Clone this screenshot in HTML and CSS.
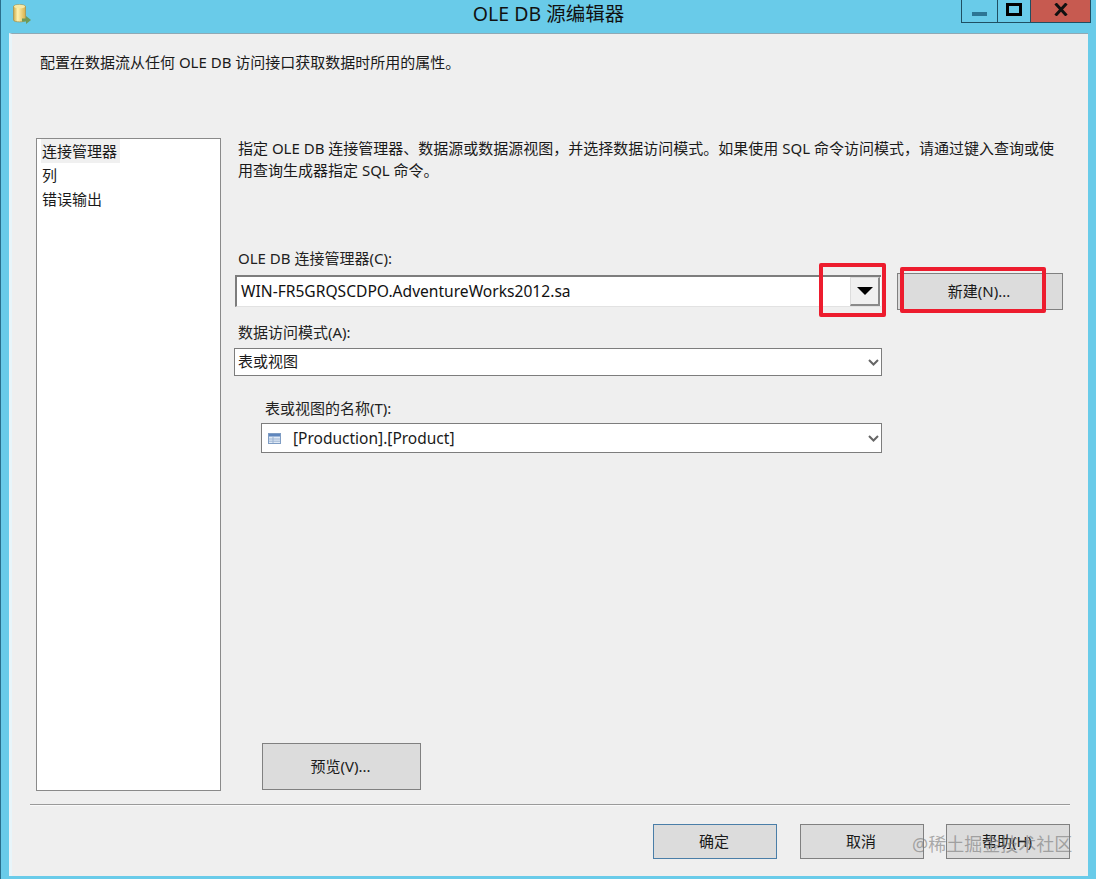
FILE: index.html
```html
<!DOCTYPE html>
<html lang="zh-CN">
<head>
    <meta charset="UTF-8">
    <meta name="viewport" content="width=device-width, initial-scale=1.0">
    <title>OLE DB 源编辑器</title>
    <link rel="stylesheet" href="styles.css">
</head>
<body>
    <div class="window">
        <!-- titlebar -->
        <header class="titlebar">
            <svg class="app-icon" width="20" height="21" viewBox="0 0 20 21">
                <defs>
                    <linearGradient id="can" x1="0" x2="1" y1="0" y2="0">
                        <stop offset="0" stop-color="#c9a94a"/>
                        <stop offset="0.35" stop-color="#fff3b0"/>
                        <stop offset="1" stop-color="#d8b04c"/>
                    </linearGradient>
                </defs>
                <path d="M0.5 2.5 C0.5 0 12.5 0 12.5 2.5 V16 C12.5 18.5 0.5 18.5 0.5 16 Z" fill="url(#can)" stroke="#a98f45" stroke-width="0.7"/>
                <ellipse cx="6.5" cy="2.5" rx="5.5" ry="1.8" fill="#f6e9a6"/>
                <path d="M9 14.5 H13 V12 L18 16 L13 20 V17.5 H9 Z" fill="#6f9a58"/>
            </svg>
            <h1 class="title">OLE DB 源编辑器</h1>
            <div class="controls">
                <div class="ctl ctl-min"><span class="min-bar"></span></div>
                <div class="ctl ctl-max"><span class="max-box"></span></div>
                <div class="ctl ctl-close">
                    <svg width="14" height="13" viewBox="0 0 14 13"><path d="M1.5 0.5 L12.5 12.5 M12.5 0.5 L1.5 12.5" stroke="#111" stroke-width="3" fill="none"/></svg>
                </div>
            </div>
        </header>

        <!-- client area -->
        <main class="client">
            <p class="intro">配置在数据流从任何 OLE DB 访问接口获取数据时所用的属性。</p>

            <div class="content">
                <ul class="nav">
                    <li class="nav-item active">连接管理器</li>
                    <li class="nav-item">列</li>
                    <li class="nav-item">错误输出</li>
                </ul>

                <section class="panel">
                    <p class="desc">指定 OLE DB 连接管理器、数据源或数据源视图，并选择数据访问模式。如果使用 SQL 命令访问模式，请通过键入查询或使<br>用查询生成器指定 SQL 命令。</p>

                    <label class="label label-conn">OLE DB 连接管理器(C):</label>
                    <div class="conn-row">
                        <div class="conn-combo">
                            <span class="conn-value">WIN-FR5GRQSCDPO.AdventureWorks2012.sa</span>
                            <span class="conn-arrow">
                                <svg width="16" height="8" viewBox="0 0 16 8"><path d="M0 0 H16 L8 8 Z" fill="#000"/></svg>
                            </span>
                        </div>
                        <button class="btn btn-new">新建(N)...</button>
                    </div>

                    <label class="label label-mode">数据访问模式(A):</label>
                    <div class="combo combo-mode">
                        <span class="mode-value">表或视图</span>
                        <svg class="chevron" width="11" height="7" viewBox="0 0 11 7"><path d="M1 1 L5.5 5.5 L10 1" stroke="#666" stroke-width="2" fill="none"/></svg>
                    </div>

                    <label class="label label-table">表或视图的名称(T):</label>
                    <div class="combo combo-table">
                        <svg class="table-icon" width="13" height="11" viewBox="0 0 13 11">
                            <rect x="0.5" y="0.5" width="12" height="10" fill="#dfe9f5" stroke="#7f9dc4"/>
                            <rect x="1" y="1" width="11" height="2.5" fill="#5f86bd"/>
                            <path d="M1 6 H12 M1 8.2 H12 M5 3.5 V10" stroke="#9db4d3" fill="none"/>
                        </svg>
                        <span class="table-value">[Production].[Product]</span>
                        <svg class="chevron" width="11" height="7" viewBox="0 0 11 7"><path d="M1 1 L5.5 5.5 L10 1" stroke="#666" stroke-width="2" fill="none"/></svg>
                    </div>

                    <button class="btn btn-preview">预览(V)...</button>
                </section>
            </div>

            <div class="separator"></div>

            <footer class="actions">
                <button class="btn btn-action btn-default">确定</button>
                <button class="btn btn-action">取消</button>
                <button class="btn btn-action">帮助(H)</button>
            </footer>
        </main>

        <!-- annotations on top of the screenshot -->
        <div class="mark mark-arrow"></div>
        <div class="mark mark-new"></div>
        <div class="watermark">@稀土掘金技术社区</div>
    </div>
</body>
</html>
```

FILE: styles.css
```css
*{
    margin: 0;
    padding: 0;
    box-sizing: border-box;
}

html, body{
    width: 1096px;
    height: 879px;
    overflow: hidden;
}

body{
    font-family: "Noto Sans", "Noto Sans CJK SC", sans-serif;
    font-size: 15px;
    color: #1a1a1a;
}

.window{
    position: relative;
    display: flex;
    flex-direction: column;
    width: 1096px;
    height: 879px;
    background: #69cbe9;
    border-left: 1px solid #2a6f8c;
}

/* titlebar */
.titlebar{
    display: flex;
    align-items: flex-start;
    height: 33px;
    flex: none;
    position: relative;
}

.app-icon{
    margin: 4px 0 0 12px;
}

.title{
    position: absolute;
    left: 0;
    right: 0;
    top: 1px;
    text-align: center;
    font-size: 19.5px;
    line-height: 25px;
    font-weight: 400;
    color: #111;
}

.controls{
    position: absolute;
    top: 0;
    left: 960px;
    display: flex;
    height: 23px;
    border: 1px solid #1f4f63;
    border-top: none;
}

.ctl{
    display: flex;
    align-items: center;
    justify-content: center;
    height: 22px;
}

.ctl-min{
    width: 36px;
    border-right: 1px solid #1f4f63;
}

.min-bar{
    display: block;
    width: 15px;
    height: 4px;
    margin-top: 5px;
    background: #2d7594;
}

.ctl-max{
    width: 33px;
    border-right: 1px solid #1f4f63;
}

.max-box{
    display: block;
    width: 16px;
    height: 13px;
    margin-bottom: 4px;
    border: 3px solid #000;
}

.ctl-close{
    width: 59px;
    background: #c75a50;
}

.ctl-close svg{
    margin-bottom: 4px;
}

/* client */
.client{
    flex: none;
    width: 1079px;
    height: 843px;
    margin-left: 8px;
    background: #efefef;
    border-top: 1px solid #8fa9b5;
    border-left: 3px solid #e8f5fa;
}

.intro{
    margin: 17px 0 0 28px;
    line-height: 22px;
}

.content{
    display: flex;
    height: 654px;
    margin: 64px 0 0 24px;
}

.nav{
    list-style: none;
    width: 185px;
    height: 653px;
    margin-top: 1px;
    padding-top: 0;
    background: #fff;
    border: 1px solid #8a8a8a;
}

.nav-item{
    height: 24px;
    line-height: 24px;
    padding-left: 5px;
}

.nav-item.active{
    width: 79px;
    margin-left: 4px;
    padding-left: 1px;
    background: #f0f0f0;
}

.panel{
    display: flex;
    flex-direction: column;
    align-items: flex-start;
    height: 653px;
    margin-left: 13px;
}

.desc{
    margin-left: 4px;
    line-height: 22px;
    white-space: nowrap;
}

.label{
    display: block;
    line-height: 20px;
    color: #222;
}

.label-conn{
    margin: 67px 0 0 4px;
}

.label-mode{
    margin: 12px 0 0 4px;
}

.label-table{
    margin: 22px 0 0 31px;
}

.conn-row{
    display: flex;
    align-items: flex-start;
    margin-top: 5px;
    margin-left: 1px;
}

.conn-combo{
    display: flex;
    align-items: center;
    justify-content: space-between;
    width: 646px;
    height: 32px;
    margin-top: 2px;
    padding: 0 1px 0 4px;
    background: #fff;
    border-top: 2px solid #7d7d7d;
    border-left: 2px solid #7d7d7d;
    border-bottom: 1px solid #e2e2e2;
}

.conn-value{
    font-size: 15.6px;
    margin-top: -1px;
    color: #111;
}

.conn-arrow{
    display: flex;
    align-items: center;
    justify-content: center;
    width: 30px;
    height: 29px;
    background: #f0f0f0;
    border: 1px solid #dcdcdc;
    border-right: 2px solid #8a8a8a;
    border-bottom: 2px solid #8a8a8a;
}

.btn{
    font: inherit;
    color: #1a1a1a;
    background: #dcdcdc;
    border: 1px solid #808080;
}

.btn-new{
    width: 166px;
    height: 37px;
    margin-left: 16px;
    padding: 0 2px 2px 0;
}

.combo{
    display: flex;
    align-items: center;
    background: #fff;
    border: 1px solid #7d7d7d;
}

.combo-mode{
    width: 648px;
    height: 28px;
    margin-top: 6px;
    padding-left: 3px;
}

.mode-value{
    margin-top: -3px;
}

.combo-table{
    width: 621px;
    height: 30px;
    margin: 5px 0 0 27px;
    padding-left: 6px;
}

.table-icon{
    margin-right: 12px;
}

.table-value{
    font-size: 15.5px;
}

.chevron{
    margin-left: auto;
    margin-right: 2px;
}

.btn-preview{
    width: 159px;
    height: 47px;
    margin: auto 0 0 28px;
    padding: 0 2px 2px 0;
}

.separator{
    width: 1040px;
    height: 2px;
    margin: 13px 0 0 18px;
    background: #fafafa;
    border-top: 1px solid #9a9a9a;
}

.actions{
    display: flex;
    justify-content: flex-end;
    gap: 22px;
    width: 1058px;
    margin-top: 18px;
}

.btn-action{
    width: 124px;
    height: 35px;
    padding: 0 2px 2px 0;
}

.btn-default{
    border-color: #4a7ea8;
    margin-right: 1px;
}

/* red boxes drawn over the dialog */
.mark{
    position: absolute;
    border: 4px solid #ed1c2e;
    border-radius: 2px;
}

.mark-arrow{
    left: 818px;
    top: 263px;
    width: 67px;
    height: 54px;
}

.mark-new{
    left: 899px;
    top: 267px;
    width: 146px;
    height: 46px;
}

.watermark{
    position: absolute;
    left: 911px;
    top: 831px;
    font-size: 18px;
    line-height: 26px;
    white-space: nowrap;
    color: rgba(120, 120, 120, 0.6);
}
```
